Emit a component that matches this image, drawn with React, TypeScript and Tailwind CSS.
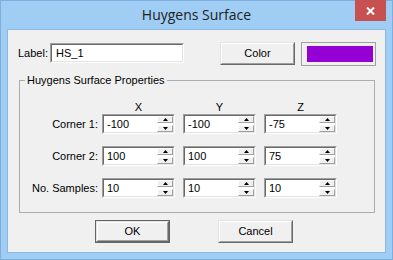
import React from "react";

const FONT = "font-['Liberation_Sans',Arial,sans-serif]";

function Sunken({ className, children }: { className: string; children?: React.ReactNode }) {
  return (
    <div className={`border border-t-[#a0a0a0] border-l-[#a0a0a0] border-r-white border-b-white ${className}`}>
      <div className="h-full border border-t-[#696969] border-l-[#696969] border-r-[#e3e3e3] border-b-[#e3e3e3] bg-white">
        {children}
      </div>
    </div>
  );
}

function Raised({ children, isDefault }: { children: React.ReactNode; isDefault?: boolean }) {
  const face = (
    <div className="h-full border border-t-[#e3e3e3] border-l-[#e3e3e3] border-r-[#696969] border-b-[#696969]">
      <div className="flex h-full items-center justify-center border border-t-white border-l-white border-r-[#a0a0a0] border-b-[#a0a0a0] bg-[#f0f0f0] pb-px">
        {children}
      </div>
    </div>
  );
  if (isDefault) {
    return <div className="h-[23px] w-[75px] border border-[#646464]">{face}</div>;
  }
  return <div className="h-[23px] w-[75px]">{face}</div>;
}

function SpinBtn({ up }: { up?: boolean }) {
  return (
    <div className="flex h-[7px] items-center justify-center border border-t-white border-l-white border-r-[#a0a0a0] border-b-[#a0a0a0] bg-[#f0f0f0]">
      <svg width="5" height="3" viewBox="0 0 5 3">
        <polygon points={up ? "2.5,0 5,3 0,3" : "0,0 5,0 2.5,3"} fill="#000" />
      </svg>
    </div>
  );
}

function Spin({ value }: { value: string }) {
  return (
    <Sunken className="h-[20px] w-[73px]">
      <div className="flex h-full items-center">
        <span className="flex-1 pl-[3px] leading-[16px]">{value}</span>
        <div className="flex h-full w-[16px] flex-col justify-between">
          <SpinBtn up />
          <SpinBtn />
        </div>
      </div>
    </Sunken>
  );
}

const rows = [
  { label: "Corner 1:", values: ["-100", "-100", "-75"] },
  { label: "Corner 2:", values: ["100", "100", "75"] },
  { label: "No. Samples:", values: ["10", "10", "10"] },
];

export default function App() {
  return (
    <div className={`flex h-[260px] w-[393px] flex-col border border-[#7eaede] bg-[#9fcdf4] ${FONT} text-[11px] text-black`}>
      {/* title bar */}
      <div className="relative h-[28px] shrink-0 text-center">
        <span className="font-['Open_Sans',sans-serif] text-[14px] leading-[28px] text-[#222]">Huygens Surface</span>
        <button className="absolute right-[6px] top-[-1px] flex h-[21px] w-[31px] items-center justify-center bg-[#c75050]">
          <svg width="9" height="8" viewBox="0 0 9 8">
            <path d="M1 0.5 L8 7.5 M8 0.5 L1 7.5" stroke="#fff" strokeWidth="2" />
          </svg>
        </button>
      </div>

      {/* client */}
      <div className="mx-[6px] h-[224px] shrink-0 border border-[#8db8e0] bg-[#f0f0f0]">
        <div className="flex items-start pl-[10px] pt-[12px]">
          <span className="mt-px w-[32px] leading-[20px]">Label:</span>
          <Sunken className="mt-px h-[20px] w-[134px]">
            <div className="pl-[4px] leading-[16px]">HS_1</div>
          </Sunken>
          <div className="ml-[36px]">
            <Raised>Color</Raised>
          </div>
          <div className="ml-[6px] h-[24px] w-[75px] border border-[#a0a0a0] py-[3px] pl-[5px] pr-[2px]">
            <div className="h-full bg-[#9400d3]" />
          </div>
        </div>

        <fieldset className="ml-[11px] mt-[8px] w-[356px] border border-[#adadad] pb-[14px]">
          <legend className="ml-[5px] px-[2px] leading-[13px]">Huygens Surface Properties</legend>
          <div className="mt-[14px] flex h-[13px] leading-[13px]">
            <div className="w-[82px]" />
            <div className="w-[73px] text-center">X</div>
            <div className="ml-[8px] w-[73px] text-center">Y</div>
            <div className="ml-[8px] w-[73px] text-center">Z</div>
          </div>
          {rows.map((r, i) => (
            <div key={r.label} className={`flex items-center ${i > 0 ? "mt-[12px]" : ""}`}>
              <span className="w-[79px] pr-px text-right">{r.label}</span>
              <div className="ml-[3px]">
                <Spin value={r.values[0]} />
              </div>
              <div className="ml-[8px]">
                <Spin value={r.values[1]} />
              </div>
              <div className="ml-[8px]">
                <Spin value={r.values[2]} />
              </div>
            </div>
          ))}
        </fieldset>

        <div className="mt-[7px] flex gap-[48px] pl-[87px]">
          <Raised isDefault>OK</Raised>
          <Raised>Cancel</Raised>
        </div>
      </div>
    </div>
  );
}
